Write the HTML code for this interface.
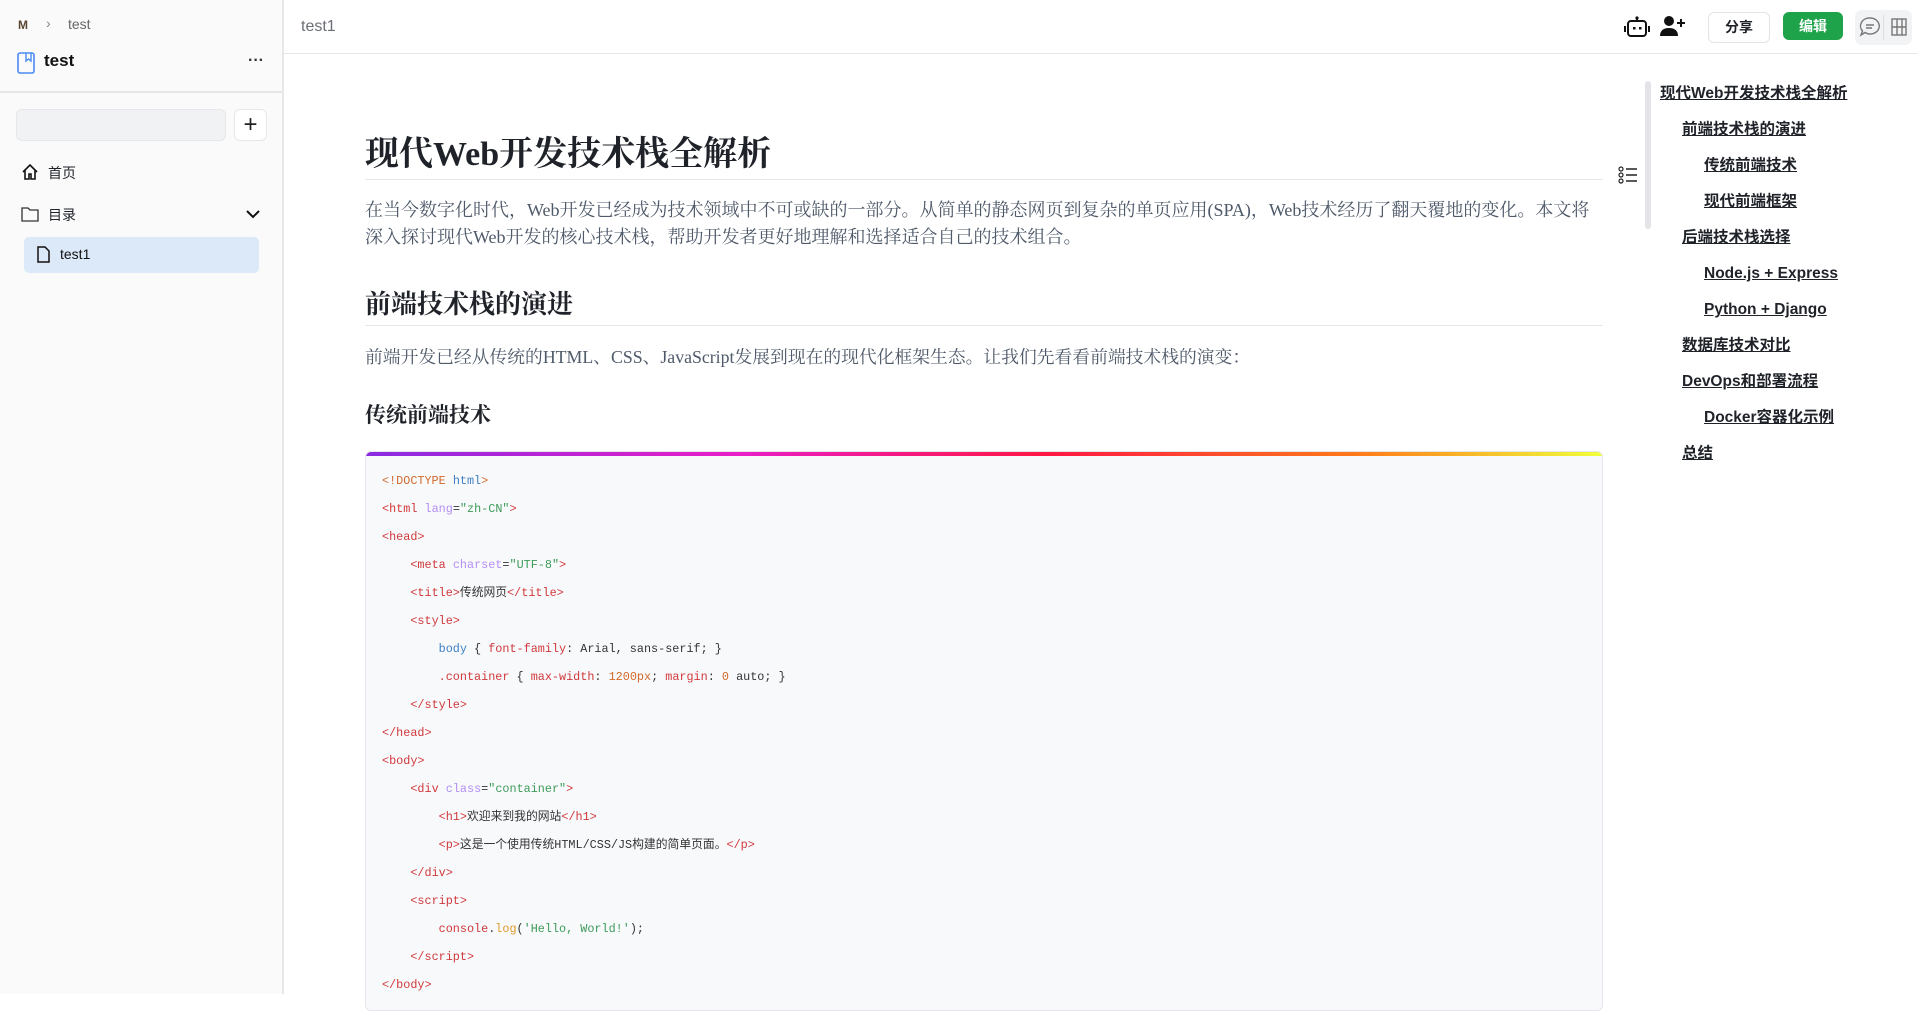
<!DOCTYPE html>
<html><head><meta charset="utf-8"><style>
*{box-sizing:border-box;margin:0;padding:0}
body{width:1917px;height:994px;overflow:hidden;background:#fff;font-family:"Liberation Sans","Noto Sans CJK SC",sans-serif;position:relative;color:#1f2329}
.a{position:absolute}
#side{left:0;top:0;width:284px;height:994px;background:#fafafa;border-right:2px solid #e8e8ea}
.serif{font-family:"Liberation Serif","Noto Serif CJK SC",serif}
.code{font-family:"Liberation Mono","Noto Sans CJK SC",monospace;font-size:11.8px;color:#333;white-space:pre}
.t{color:#d0393c}.at{color:#b48ef5}.s{color:#3d9b5a}.k{color:#3f7fc4}.n{color:#d2692a}.f{color:#e0992b}
.toc{position:absolute;font-size:15.5px;line-height:20px;font-weight:bold;text-decoration:underline;color:#1f2329;white-space:nowrap}
</style></head><body>
<div id="side" class="a">
  <div class="a" style="left:18px;top:18px;font-size:12px;font-weight:bold;color:#5a4630">M</div>
  <div class="a" style="left:46px;top:15px;font-size:14px;color:#888">›</div>
  <div class="a" style="left:68px;top:16px;font-size:14px;color:#666">test</div>
  <svg class="a" style="left:16px;top:52px" width="20" height="22" viewBox="0 0 20 22"><rect x="2" y="1" width="16" height="20" rx="2" fill="none" stroke="#4a8af4" stroke-width="1.6"/><path d="M10 1v8l2.5-2 2.5 2V1" fill="none" stroke="#4a8af4" stroke-width="1.4"/></svg>
  <div class="a" style="left:44px;top:51px;font-size:17px;font-weight:bold;color:#111">test</div>
  <div class="a" style="left:248px;top:52px;font-size:16px;font-weight:bold;color:#333">···</div>
  <div class="a" style="left:0;top:91px;width:282px;height:2px;background:#e6e6e8"></div>
  <div class="a" style="left:16px;top:109px;width:210px;height:32px;background:#f1f2f4;border:1px solid #e6e7ea;border-radius:6px"></div>
  <div class="a" style="left:234px;top:109px;width:33px;height:32px;background:#fff;border:1px solid #e6e7ea;border-radius:6px;text-align:center;font-size:24px;line-height:29px;color:#222">+</div>
  <svg class="a" style="left:21px;top:163px" width="18" height="18" viewBox="0 0 18 18"><path d="M2 9L9 2l7 7M4 7v9h4v-5h2v5h4V7" fill="none" stroke="#111" stroke-width="1.6"/></svg>
  <div class="a" style="left:48px;top:163px;font-size:14px">首页</div>
  <svg class="a" style="left:21px;top:206px" width="18" height="16" viewBox="0 0 18 16"><path d="M1 2h6l2 2h8v11H1z" fill="none" stroke="#333" stroke-width="1.3"/></svg>
  <div class="a" style="left:48px;top:205px;font-size:14px">目录</div>
  <svg class="a" style="left:245px;top:209px" width="16" height="10" viewBox="0 0 16 10"><path d="M2 2l6 6 6-6" fill="none" stroke="#111" stroke-width="2"/></svg>
  <div class="a" style="left:24px;top:237px;width:235px;height:36px;background:#dce9f8;border-radius:5px"></div>
  <svg class="a" style="left:37px;top:246px" width="13" height="17" viewBox="0 0 13 17"><path d="M1 1h7l4 4v11H1z" fill="none" stroke="#111" stroke-width="1.5"/></svg>
  <div class="a" style="left:60px;top:246px;font-size:14px;color:#111">test1</div>
</div>
<div class="a" style="left:284px;top:0;width:1633px;height:54px;border-bottom:1px solid #e5e6e8"></div>
<div class="a" style="left:301px;top:18px;font-size:16px;color:#6b6f76">test1</div>
<svg class="a" style="left:1624px;top:15px" width="26" height="24" viewBox="0 0 26 24"><rect x="4" y="6" width="18" height="15" rx="3" fill="none" stroke="#111" stroke-width="2"/><circle cx="13" cy="3" r="1.6" fill="#111"/><path d="M13 4v2M1 11v6M25 11v6" stroke="#111" stroke-width="2"/><rect x="9" y="12" width="2.5" height="2.5" fill="#111"/><rect x="15" y="12" width="2.5" height="2.5" fill="#111"/></svg>
<svg class="a" style="left:1660px;top:15px" width="26" height="22" viewBox="0 0 26 22"><circle cx="9" cy="6" r="5" fill="#111"/><path d="M0 21c0-6 4-8 9-8s9 2 9 8z" fill="#111"/><path d="M21 4v8M17 8h8" stroke="#111" stroke-width="2"/></svg>
<div class="a" style="left:1708px;top:12px;width:62px;height:31px;border:1px solid #e3e4e6;border-radius:6px;text-align:center;line-height:29px;font-size:14px;font-weight:bold">分享</div>
<div class="a" style="left:1783px;top:12px;width:60px;height:28px;background:#1fa34a;border-radius:6px;text-align:center;line-height:28px;font-size:14px;font-weight:bold;color:#fff">编辑</div>
<div class="a" style="left:1855px;top:10px;width:57px;height:35px;background:#f2f3f5;border-radius:7px"></div>
<svg class="a" style="left:1859px;top:16px" width="22" height="22" viewBox="0 0 22 22"><path d="M11 2a9 8 0 1 1-5 14.5L2 19l1.5-4A9 8 0 0 1 11 2z" fill="none" stroke="#777" stroke-width="1.4"/><path d="M7 9h8M7 12h6" stroke="#777" stroke-width="1.4"/></svg>
<div class="a" style="left:1883px;top:15px;width:1px;height:25px;background:#ddd"></div>
<svg class="a" style="left:1891px;top:18px" width="16" height="18" viewBox="0 0 16 18"><rect x="1" y="1" width="14" height="16" fill="none" stroke="#777" stroke-width="1.4"/><path d="M6 1v16M11 1v16M1 9h14" stroke="#777" stroke-width="1.4"/></svg>

<div class="a serif" style="left:365px;top:126px;font-size:34px;font-weight:bold;color:#1f2329">现代Web开发技术栈全解析</div>
<div class="a" style="left:365px;top:179px;width:1238px;height:1px;background:#e5e6e8"></div>
<div class="a serif" style="left:365px;top:197px;width:1238px;font-size:18px;line-height:27px;color:#4e5969">在当今数字化时代，Web开发已经成为技术领域中不可或缺的一部分。从简单的静态网页到复杂的单页应用(SPA)，Web技术经历了翻天覆地的变化。本文将深入探讨现代Web开发的核心技术栈，帮助开发者更好地理解和选择适合自己的技术组合。</div>
<div class="a serif" style="left:365px;top:284px;font-size:26px;font-weight:bold">前端技术栈的演进</div>
<div class="a" style="left:365px;top:325px;width:1238px;height:1px;background:#e5e6e8"></div>
<div class="a serif" style="left:365px;top:344px;font-size:17.8px;color:#4e5969">前端开发已经从传统的HTML、CSS、JavaScript发展到现在的现代化框架生态。让我们先看看前端技术栈的演变：</div>
<div class="a serif" style="left:365px;top:399px;font-size:21px;font-weight:bold">传统前端技术</div>
<div class="a" style="left:365px;top:451px;width:1238px;height:560px;background:#f8f9fb;border:1px solid #e5e6ea;border-radius:6px;overflow:hidden">
  <div style="height:4px;background:linear-gradient(90deg,#8a2be2,#e91ec8 30%,#ff1744 55%,#ff7a1a 80%,#f0ff3a)"></div>
</div>
<div class="a code" style="left:382px;top:467px;line-height:28px"><span class="n">&lt;!DOCTYPE</span> <span class="k">html</span><span class="n">&gt;</span>
<span class="t">&lt;html</span> <span class="at">lang</span>=<span class="s">"zh-CN"</span><span class="t">&gt;</span>
<span class="t">&lt;head&gt;</span>
    <span class="t">&lt;meta</span> <span class="at">charset</span>=<span class="s">"UTF-8"</span><span class="t">&gt;</span>
    <span class="t">&lt;title&gt;</span>传统网页<span class="t">&lt;/title&gt;</span>
    <span class="t">&lt;style&gt;</span>
        <span class="k">body</span> { <span class="t">font-family</span>: Arial, sans-serif; }
        <span class="t">.container</span> { <span class="t">max-width</span>: <span class="n">1200px</span>; <span class="t">margin</span>: <span class="n">0</span> auto; }
    <span class="t">&lt;/style&gt;</span>
<span class="t">&lt;/head&gt;</span>
<span class="t">&lt;body&gt;</span>
    <span class="t">&lt;div</span> <span class="at">class</span>=<span class="s">"container"</span><span class="t">&gt;</span>
        <span class="t">&lt;h1&gt;</span>欢迎来到我的网站<span class="t">&lt;/h1&gt;</span>
        <span class="t">&lt;p&gt;</span>这是一个使用传统HTML/CSS/JS构建的简单页面。<span class="t">&lt;/p&gt;</span>
    <span class="t">&lt;/div&gt;</span>
    <span class="t">&lt;script&gt;</span>
        <span class="t">console</span>.<span class="f">log</span>(<span class="s">'Hello, World!'</span>);
    <span class="t">&lt;/script&gt;</span>
<span class="t">&lt;/body&gt;</span></div>

<svg class="a" style="left:1618px;top:166px" width="20" height="18" viewBox="0 0 20 18"><circle cx="3" cy="3" r="2" fill="none" stroke="#222" stroke-width="1.2"/><circle cx="3" cy="9" r="2" fill="none" stroke="#222" stroke-width="1.2"/><circle cx="3" cy="15" r="2" fill="none" stroke="#222" stroke-width="1.2"/><path d="M8 3h11M8 9h11M8 15h11" stroke="#222" stroke-width="1.4"/></svg>
<div class="a" style="left:1645px;top:81px;width:6px;height:148px;background:#e3e4e8;border-radius:3px"></div>
<div class="toc" style="left:1660px;top:84px">现代Web开发技术栈全解析</div>
<div class="toc" style="left:1682px;top:120px">前端技术栈的演进</div>
<div class="toc" style="left:1704px;top:156px">传统前端技术</div>
<div class="toc" style="left:1704px;top:192px">现代前端框架</div>
<div class="toc" style="left:1682px;top:228px">后端技术栈选择</div>
<div class="toc" style="left:1704px;top:264px">Node.js + Express</div>
<div class="toc" style="left:1704px;top:300px">Python + Django</div>
<div class="toc" style="left:1682px;top:336px">数据库技术对比</div>
<div class="toc" style="left:1682px;top:372px">DevOps和部署流程</div>
<div class="toc" style="left:1704px;top:408px">Docker容器化示例</div>
<div class="toc" style="left:1682px;top:444px">总结</div>
</body></html>
